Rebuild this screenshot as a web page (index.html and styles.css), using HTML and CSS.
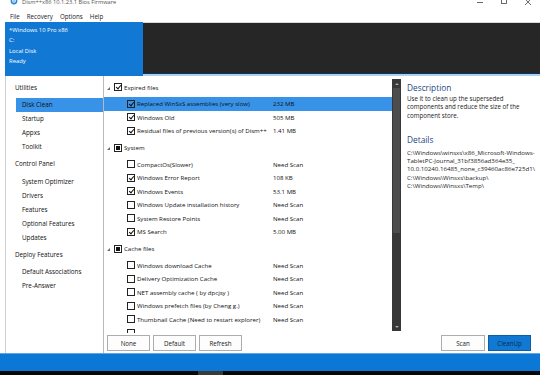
FILE: index.html
```html
<!DOCTYPE html>
<html lang="en">
<head>
    <meta charset="UTF-8">
    <meta name="viewport" content="width=device-width, initial-scale=1.0">
    <title>Dism++</title>
    <link rel="stylesheet" href="styles.css">
</head>
<body>
    <div class="window">
        <!-- Title bar (top cut off in the capture) -->
        <div class="titlebar">
            <svg class="app-icon" viewBox="0 0 8 8" width="8" height="8">
                <circle cx="4" cy="4" r="2.6" fill="none" stroke="#2a8ad8" stroke-width="1.6"/>
                <circle cx="4" cy="4" r="0.8" fill="#2a8ad8"/>
            </svg>
            <span class="title">Dism++x86 10.1.23.1 Bios Firmware</span>
            <div class="controls">
                <svg viewBox="0 0 24 10" width="24" height="10"><line x1="9" y1="2.5" x2="15" y2="2.5" stroke="#444" stroke-width="0.8"/></svg>
                <svg viewBox="0 0 24 10" width="24" height="10"><rect x="9.5" y="-1.5" width="5" height="5" fill="none" stroke="#444" stroke-width="0.8"/></svg>
                <svg viewBox="0 0 24 10" width="24" height="10"><path d="M9 -1 L15 5 M15 -1 L9 5" stroke="#444" stroke-width="0.8"/></svg>
            </div>
        </div>

        <div class="menubar">
            <span>File</span>
            <span>Recovery</span>
            <span>Options</span>
            <span>Help</span>
        </div>

        <div class="header">
            <div class="session">
                <p>*Windows 10 Pro x86</p>
                <p>C:</p>
                <p>Local Disk</p>
                <p>Ready</p>
            </div>
            <div class="banner"></div>
        </div>

        <div class="main">
            <nav class="sidebar">
                <div class="nav-group">Utilities</div>
                <div class="nav-item active">Disk Clean</div>
                <div class="nav-item">Startup</div>
                <div class="nav-item">Appxs</div>
                <div class="nav-item">Toolkit</div>
                <div class="nav-group">Control Panel</div>
                <div class="nav-item">System Optimizer</div>
                <div class="nav-item">Drivers</div>
                <div class="nav-item">Features</div>
                <div class="nav-item">Optional Features</div>
                <div class="nav-item">Updates</div>
                <div class="nav-group">Deploy Features</div>
                <div class="nav-item">Default Associations</div>
                <div class="nav-item">Pre-Answer</div>
            </nav>

            <div class="content">
                <div class="panes">
                    <div class="list-wrap">
                        <div class="tree">
                            <div class="group"><span class="arrow"></span><span class="cb on"></span>Expired files</div>
                            <div class="row selected"><span class="cb on"></span><span class="name">Replaced WinSxS assemblies (very slow)</span><span class="size">232 MB</span></div>
                            <div class="row"><span class="cb on"></span><span class="name">Windows Old</span><span class="size">505 MB</span></div>
                            <div class="row"><span class="cb on"></span><span class="name">Residual files of previous version(s) of Dism++</span><span class="size">1.41 MB</span></div>

                            <div class="group"><span class="arrow"></span><span class="cb part"></span>System</div>
                            <div class="row"><span class="cb"></span><span class="name">CompactOs(Slower)</span><span class="size">Need Scan</span></div>
                            <div class="row"><span class="cb on"></span><span class="name">Windows Error Report</span><span class="size">108 KB</span></div>
                            <div class="row"><span class="cb on"></span><span class="name">Windows Events</span><span class="size">53.1 MB</span></div>
                            <div class="row"><span class="cb"></span><span class="name">Windows Update installation history</span><span class="size">Need Scan</span></div>
                            <div class="row"><span class="cb"></span><span class="name">System Restore Points</span><span class="size">Need Scan</span></div>
                            <div class="row"><span class="cb on"></span><span class="name">MS Search</span><span class="size">5.00 MB</span></div>

                            <div class="group"><span class="arrow"></span><span class="cb part"></span>Cache files</div>
                            <div class="row"><span class="cb"></span><span class="name">Windows download Cache</span><span class="size">Need Scan</span></div>
                            <div class="row"><span class="cb"></span><span class="name">Delivery Optimization Cache</span><span class="size">Need Scan</span></div>
                            <div class="row"><span class="cb"></span><span class="name">NET assembly cache ( by dpcjsy )</span><span class="size">Need Scan</span></div>
                            <div class="row"><span class="cb"></span><span class="name">Windows prefetch files (by Cheng g.)</span><span class="size">Need Scan</span></div>
                            <div class="row"><span class="cb"></span><span class="name">Thumbnail Cache (Need to restart explorer)</span><span class="size">Need Scan</span></div>
                            <div class="row"><span class="cb"></span></div>
                        </div>
                        <div class="scrollbar">
                            <div class="sb-btn up"></div>
                            <div class="sb-thumb"></div>
                            <div class="sb-track"></div>
                            <div class="sb-btn down"></div>
                        </div>
                    </div>

                    <div class="info">
                        <h3>Description</h3>
                        <p>Use it to clean up the superseded components and reduce the size of the component store.</p>
                        <h3 class="details-title">Details</h3>
                        <p class="details">C:\Windows\winsxs\x86_Microsoft-Windows-<br>TabletPC-Journal_31bf3856ad364e35_<br>10.0.10240.16485_none_c39460ac86e725d1\<br>C:\Windows\Winsxs\backup\<br>C:\Windows\Winsxs\Temp\</p>
                    </div>
                </div>

                <div class="actions">
                    <button class="btn">None</button>
                    <button class="btn">Default</button>
                    <button class="btn">Refresh</button>
                    <button class="btn push">Scan</button>
                    <button class="btn primary">CleanUp</button>
                </div>
            </div>
        </div>

        <div class="statusbar"></div>
        <div class="taskbar"><span class="task"></span></div>
    </div>
</body>
</html>
```

FILE: styles.css
```css
* {
    box-sizing: border-box;
}

body {
    margin: 0;
    font-family: "Open Sans", "Noto Sans", sans-serif;
    color: #111;
    background-color: #fff;
}

.window {
    width: 540px;
    height: 375px;
    display: flex;
    flex-direction: column;
    overflow: hidden;
}

/* title bar */
.titlebar {
    height: 10px;
    flex-shrink: 0;
    display: flex;
    align-items: flex-start;
    padding-left: 10px;
    overflow: hidden;
    font-size: 5.7px;
    color: #555;
}

.app-icon {
    margin-top: -3px;
}

.title {
    margin-left: 4px;
    line-height: 7px;
    margin-top: -1px;
}

.controls {
    margin-left: auto;
    display: flex;
}

/* menu */
.menubar {
    height: 12px;
    flex-shrink: 0;
    display: flex;
    align-items: center;
    gap: 7px;
    padding-left: 10px;
    font-size: 6.2px;
    color: #1a1a1a;
}

/* session header */
.header {
    height: 54px;
    flex-shrink: 0;
    display: flex;
    padding-left: 5px;
}

.session {
    width: 138px;
    background-color: #1178d4;
    color: #fff;
    padding: 3px 0 0 4px;
    font-size: 5.9px;
}

.session p {
    margin: 0;
    line-height: 10.3px;
}

.banner {
    flex: 1;
    background-color: #262626;
    border-top: 1px solid #d9d9d9;
    border-bottom: 2px solid #a9d2f0;
    box-shadow: inset 0 -1px 0 #10325a;
}

/* main body */
.main {
    flex: 1;
    min-height: 0;
    overflow: hidden;
    display: flex;
    padding-left: 5px;
}

.sidebar {
    width: 99px;
    border-left: 1px solid #cfcfcf;
    border-right: 1px solid #b9b9b9;
    padding-top: 1.75px;
    font-size: 6.3px;
}

.nav-group {
    height: 20.5px;
    line-height: 20.5px;
    padding-left: 9px;
}

.nav-item {
    height: 14px;
    line-height: 14px;
    margin-left: 10px;
    padding-left: 6px;
}

.nav-item.active {
    background-color: #3892e8;
}

.content {
    flex: 1;
    min-height: 0;
    display: flex;
    flex-direction: column;
}

.panes {
    flex: 1;
    display: flex;
    min-height: 0;
}

.list-wrap {
    width: 297px;
    display: flex;
}

.tree {
    flex: 1;
    overflow: hidden;
    padding-top: 1px;
    font-size: 6.1px;
}

.group {
    height: 20px;
    display: flex;
    align-items: center;
    padding-left: 3px;
}

.arrow {
    width: 0;
    height: 0;
    border-left: 3px solid transparent;
    border-bottom: 3px solid #6a6a6a;
    margin: 2px 4px 0 0;
}

.group .cb {
    margin-right: 2px;
}

.row {
    height: 13.5px;
    display: flex;
    align-items: center;
    padding-left: 23px;
}

.row.selected {
    background-color: #3892e8;
}

.row .cb {
    margin-right: 2px;
}

.name {
    width: 136px;
    white-space: nowrap;
}

.size {
    white-space: nowrap;
}

.cb {
    width: 8px;
    height: 8px;
    border: 1px solid #222;
    background-color: #fff;
    position: relative;
    flex: none;
}

.row.selected .cb {
    background-color: transparent;
}

.cb.on::after {
    content: "";
    position: absolute;
    left: 2px;
    top: 0;
    width: 2px;
    height: 4px;
    border: solid #111;
    border-width: 0 1.3px 1.3px 0;
    transform: rotate(40deg);
}

.cb.part::after {
    content: "";
    position: absolute;
    left: 1px;
    top: 1px;
    right: 1px;
    bottom: 1px;
    background-color: #111;
}

/* scrollbar */
.scrollbar {
    width: 9px;
    margin: 3px 0 2px;
    display: flex;
    flex-direction: column;
    background-color: #383838;
}

.sb-btn {
    height: 9px;
    display: flex;
    justify-content: center;
    align-items: center;
}

.sb-btn::before {
    content: "";
    border-left: 2px solid transparent;
    border-right: 2px solid transparent;
}

.sb-btn.up::before {
    border-bottom: 2px solid #a8a8a8;
}

.sb-btn.down::before {
    border-top: 2px solid #a8a8a8;
}

.sb-thumb {
    height: 145px;
    margin: 0 1px;
    background-color: #4c4c4c;
}

.sb-track {
    flex: 1;
}

/* info */
.info {
    flex: 1;
    padding: 7px 2px 0 6px;
    font-size: 6.2px;
    color: #222;
}

.info h3 {
    margin: 0;
    font-size: 8.3px;
    line-height: 10px;
    font-weight: normal;
    color: #23477f;
}

.info p {
    margin: 2px 0 0;
    line-height: 8.3px;
}

.info .details-title {
    margin-top: 15px;
}

.info .details {
    margin-top: 4px;
    font-size: 6.15px;
    white-space: nowrap;
}

/* buttons */
.actions {
    height: 20px;
    flex-shrink: 0;
    display: flex;
    align-items: center;
    gap: 3px;
    padding: 0 9px 0 3px;
}

.btn {
    width: 43px;
    height: 16px;
    padding: 0;
    border: 1px solid #adadad;
    background-color: #fdfdfd;
    font-family: inherit;
    font-size: 6.2px;
    color: #1a1a1a;
}

.btn.push {
    margin-left: auto;
    width: 44px;
}

.btn.primary {
    background-color: #1279d3;
    border-color: #0a5ea9;
    color: #062a50;
}

.statusbar {
    height: 18px;
    flex-shrink: 0;
    background-color: #0c78d6;
    border-top: 1px solid #5aa7e8;
}

.taskbar {
    height: 4px;
    flex-shrink: 0;
    background-color: #080808;
    padding-left: 198px;
}

.task {
    display: block;
    width: 25px;
    height: 4px;
    background-color: #3a3a3a;
}
```
